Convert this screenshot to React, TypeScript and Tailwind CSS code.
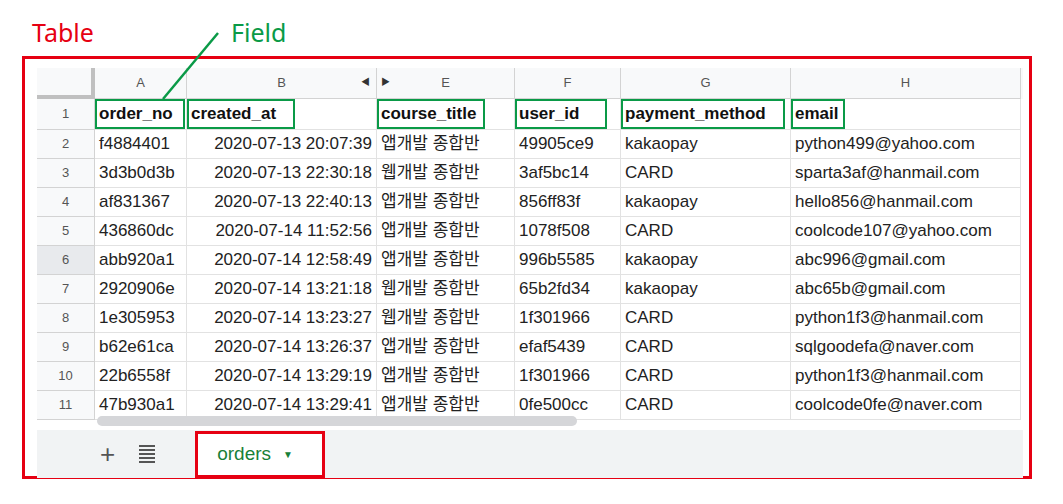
const cols = [
  { l: "A", w: 92 },
  { l: "B", w: 190 },
  { l: "E", w: 138 },
  { l: "F", w: 106 },
  { l: "G", w: 170 },
  { l: "H", w: 230 },
];
const heads = ["order_no", "created_at", "course_title", "user_id", "payment_method", "email"];
const headW = [90, 108, 108, 92, 164, 54];
const rows = [
  ["f4884401", "2020-07-13 20:07:39", "앱개발 종합반", "49905ce9", "kakaopay", "python499@yahoo.com"],
  ["3d3b0d3b", "2020-07-13 22:30:18", "웹개발 종합반", "3af5bc14", "CARD", "sparta3af@hanmail.com"],
  ["af831367", "2020-07-13 22:40:13", "앱개발 종합반", "856ff83f", "kakaopay", "hello856@hanmail.com"],
  ["436860dc", "2020-07-14 11:52:56", "앱개발 종합반", "1078f508", "CARD", "coolcode107@yahoo.com"],
  ["abb920a1", "2020-07-14 12:58:49", "앱개발 종합반", "996b5585", "kakaopay", "abc996@gmail.com"],
  ["2920906e", "2020-07-14 13:21:18", "웹개발 종합반", "65b2fd34", "kakaopay", "abc65b@gmail.com"],
  ["1e305953", "2020-07-14 13:23:27", "웹개발 종합반", "1f301966", "CARD", "python1f3@hanmail.com"],
  ["b62e61ca", "2020-07-14 13:26:37", "앱개발 종합반", "efaf5439", "CARD", "sqlgoodefa@naver.com"],
  ["22b6558f", "2020-07-14 13:29:19", "앱개발 종합반", "1f301966", "CARD", "python1f3@hanmail.com"],
  ["47b930a1", "2020-07-14 13:29:41", "앱개발 종합반", "0fe500cc", "CARD", "coolcode0fe@naver.com"],
];

export default function App() {
  return (
    <div className="relative w-[1063px] h-[504px] bg-white" style={{ fontFamily: '"Liberation Sans", "Noto Sans CJK KR", sans-serif' }}>
      <div className="absolute left-[32px] top-[14px] text-[25px] text-[#e60012]" style={{ fontFamily: '"Noto Sans", sans-serif' }}>Table</div>
      <div className="absolute left-[231px] top-[14px] text-[25px] text-[#0a9a47]" style={{ fontFamily: '"Noto Sans", sans-serif' }}>Field</div>
      <svg className="absolute left-0 top-0 z-10" width="1063" height="504">
        <line x1="218" y1="33" x2="163" y2="99" stroke="#0a9a47" strokeWidth="2.5" />
      </svg>
      <div className="absolute left-[22px] top-[56px] w-[1010px] h-[423px] border-[3px] border-[#e60012]" />
      <div className="absolute left-[37px] top-[68px] w-[986px] h-[408px] flex flex-col bg-white">
        <div className="flex shrink-0 h-[31px] bg-[#f8f9fa] text-[13px] text-[#555]">
          <div className="w-[58px] border-r-4 border-b-4 border-[#c0c0c0]" />
          {cols.map((c, i) => (
            <div key={c.l} style={{ width: c.w }} className="relative flex items-center justify-center border-r border-b border-[#d3d3d3]">
              {c.l}
              {i === 1 && <span className="absolute right-[6px] text-[9px] text-[#333]">◀</span>}
              {i === 2 && <span className="absolute left-[4px] text-[9px] text-[#333]">▶</span>}
            </div>
          ))}
        </div>
        <div className="flex shrink-0 h-[31px] text-[17px] font-bold text-[#111]">
          <div className="w-[58px] flex items-center justify-center text-[13px] font-normal text-[#555] bg-[#f8f9fa] border-r border-b border-[#d3d3d3]">1</div>
          {cols.map((c, i) => (
            <div key={c.l} style={{ width: c.w }} className="flex items-center border-r border-b border-[#e2e2e2]">
              <span style={{ width: headW[i] }} className="h-[30px] flex items-center px-[2px] border-2 border-[#0a9a47] whitespace-nowrap">{heads[i]}</span>
            </div>
          ))}
        </div>
        {rows.map((r, ri) => (
          <div key={ri} className="flex shrink-0 h-[29px] text-[17px] text-[#222]">
            <div className={`w-[58px] flex items-center justify-center text-[13px] text-[#555] border-r border-b border-[#d3d3d3] ${ri === 4 ? "bg-[#e8eaed]" : "bg-[#f8f9fa]"}`}>{ri + 2}</div>
            {r.map((v, ci) => (
              <div key={ci} style={{ width: cols[ci].w }} className={`flex items-center whitespace-nowrap overflow-hidden border-r border-b border-[#e2e2e2] ${ci === 1 ? "justify-end pr-[4px]" : "pl-[4px]"}`}>{v}</div>
            ))}
          </div>
        ))}
        <div className="shrink-0 h-[14px] flex items-start pl-[60px] -mt-[4px]">
          <div className="w-[480px] h-[10px] rounded-full bg-[#d5d6d9]" />
        </div>
        <div className="flex-1 bg-[#f1f3f4] flex items-center">
          <span className="ml-[63px] text-[26px] text-[#555] font-light">+</span>
          <span className="ml-[24px] flex flex-col gap-[2px]">
            {[0, 1, 2, 3, 4].map((k) => <span key={k} className="block w-[16px] h-[2px] bg-[#555]" />)}
          </span>
          <div className="ml-[40px] h-[47px] w-[130px] bg-white border-[3px] border-[#e60012] flex items-center pl-[19px] text-[19px] text-[#188038] mt-[1px]">
            orders <span className="ml-[12px] text-[10px]">▼</span>
          </div>
        </div>
      </div>
    </div>
  );
}
